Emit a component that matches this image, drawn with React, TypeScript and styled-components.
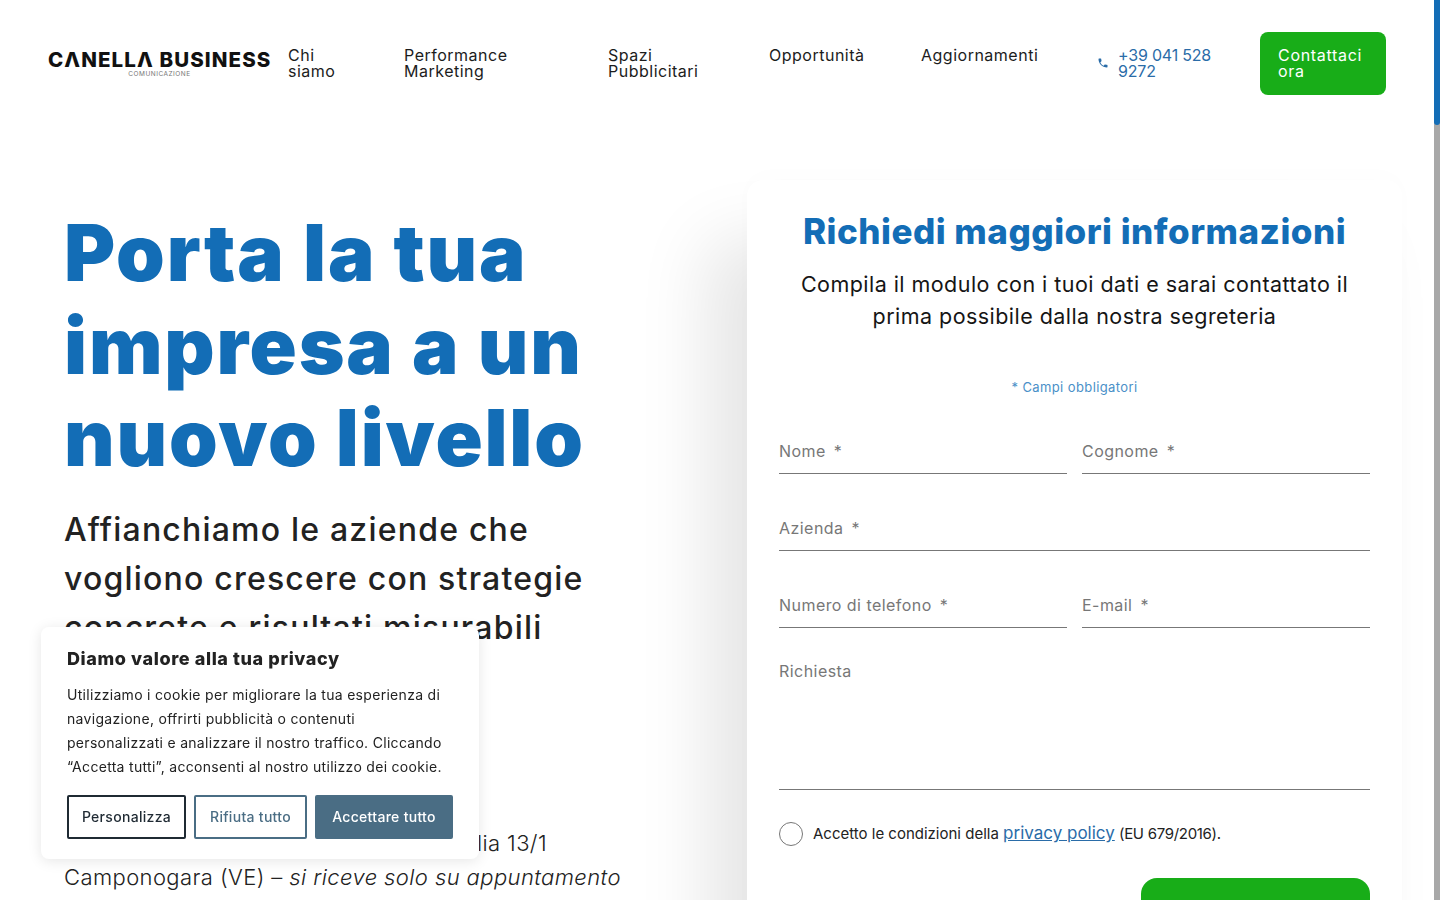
import React from "react";
import styled, { createGlobalStyle } from "styled-components";
import { MdPhone } from "react-icons/md";

const BLUE = "#136db6";
const GREEN = "#18ad18";
const SLATE = "#4a6d84";
const FONT = `Inter, "Open Sans", "Liberation Sans", sans-serif`;

const Global = createGlobalStyle`
  html, body { margin: 0; padding: 0; background: #fff; }
  body { font-family: ${FONT}; color: #222; overflow: hidden; }
  * { box-sizing: border-box; }
`;

const Page = styled.div`
  width: 1440px;
  height: 900px;
  overflow: hidden;
`;

const Header = styled.header`
  height: 127px;
  display: flex;
  align-items: flex-start;
  padding: 32px 54px 0 48px;
`;

const Logo = styled.div`
  width: 240px;
  padding-top: 17px;
  display: flex;
  flex-direction: column;
`;

const LogoName = styled.span`
  width: 223px;
  font-size: 20.5px;
  line-height: 22px;
  font-weight: 800;
  letter-spacing: 1.1px;
  color: #111;
  white-space: nowrap;
`;

const LogoSub = styled.span`
  width: 223px;
  text-align: center;
  font-size: 6.5px;
  line-height: 6px;
  letter-spacing: 0.5px;
  color: #777;
`;

const Nav = styled.nav`
  display: flex;
  align-items: flex-start;
  padding-top: 15px;
`;

const NavLink = styled.a<{ $w: number }>`
  width: ${({ $w }) => $w}px;
  padding-right: 30px;
  font-size: 16px;
  line-height: 16px;
  letter-spacing: 0.5px;
  color: #1c1c1c;
`;

const Phone = styled.a`
  width: 163px;
  display: flex;
  align-items: center;
  gap: 9px;
  padding-right: 30px;
  font-size: 16px;
  line-height: 16px;
  letter-spacing: -0.2px;
  color: #2a6ca8;
  svg { flex: none; }
`;

const CallButton = styled.a`
  width: 126px;
  height: 63px;
  padding: 15px 18px;
  border-radius: 8px;
  background: ${GREEN};
  color: #fff;
  font-size: 16px;
  line-height: 16px;
  letter-spacing: 0.7px;
`;

const Hero = styled.main`
  display: grid;
  grid-template-columns: 747px 655px;
  align-items: start;
`;

const Intro = styled.section`
  padding: 80px 0 0 64px;
`;

const Title = styled.h1`
  margin: 0 0 20px;
  font-size: 78px;
  line-height: 92.5px;
  font-weight: 900;
  letter-spacing: 1.8px;
  color: ${BLUE};
`;

const Lead = styled.p`
  margin: 0;
  height: 321px;
  width: 540px;
  font-size: 32px;
  line-height: 49px;
  font-weight: 500;
  letter-spacing: 1.2px;
  color: #222;
`;

const Address = styled.p`
  margin: 0;
  font-size: 22px;
  line-height: 34px;
  font-weight: 300;
  letter-spacing: 0.4px;
  color: #222;
  white-space: nowrap;
`;

const AddressTop = styled.span`
  display: block;
  width: 483px;
  text-align: right;
`;

const Card = styled.section`
  height: 900px;
  margin-top: 53px;
  padding: 28px 32px 0;
  border-radius: 16px;
  background: #fff;
  box-shadow: -40px 60px 70px rgba(0, 0, 0, 0.1), 0 -6px 24px rgba(0, 0, 0, 0.012);
`;

const CardTitle = styled.h2`
  margin: 0 0 14px;
  text-align: center;
  font-size: 35px;
  line-height: 46px;
  font-weight: 800;
  letter-spacing: 0.5px;
  color: ${BLUE};
`;

const CardLead = styled.p`
  margin: 0 0 47px;
  text-align: center;
  font-size: 21.5px;
  line-height: 32px;
  font-weight: 400;
  letter-spacing: 0.45px;
  color: #151515;
`;

const Required = styled.p`
  margin: 0 0 31px;
  text-align: center;
  font-size: 13px;
  line-height: 16px;
  letter-spacing: 0.4px;
  color: #4a90c8;
`;

const FormGrid = styled.div`
  display: grid;
  grid-template-columns: 288px 288px;
  justify-content: space-between;
  row-gap: 29px;
`;

const Field = styled.label<{ $wide?: boolean; $tall?: boolean }>`
  grid-column: ${({ $wide }) => ($wide ? "1 / -1" : "auto")};
  height: ${({ $tall }) => ($tall ? "133px" : "48px")};
  display: block;
  padding-top: ${({ $tall }) => ($tall ? "2px" : "13px")};
  border-bottom: 1px solid #777;
  font-size: 16px;
  line-height: 24px;
  letter-spacing: 0.45px;
  color: #777;
`;

const Star = styled.span`
  margin-left: 8px;
`;

const Consent = styled.div`
  display: flex;
  align-items: center;
  gap: 10px;
  margin-top: 31px;
  font-size: 15px;
  line-height: 24px;
  color: #222;
`;

const Radio = styled.span`
  width: 24px;
  height: 24px;
  border: 1px solid #777;
  border-radius: 50%;
`;

const Policy = styled.a`
  font-size: 17px;
  color: #2a6ca8;
  text-decoration: underline;
`;

const Regulation = styled.span`
  letter-spacing: -0.3px;
`;

const Submit = styled.button`
  display: block;
  width: 229px;
  height: 80px;
  margin: 32px 0 0 auto;
  border: 0;
  border-radius: 16px;
  background: ${GREEN};
`;

const Cookie = styled.aside`
  position: fixed;
  left: 41px;
  bottom: 41px;
  width: 438px;
  height: 232px;
  padding: 20px 26px;
  border-radius: 8px;
  background: #fff;
  box-shadow: 0 2px 14px rgba(0, 0, 0, 0.1);
`;

const CookieTitle = styled.h3`
  margin: 0 0 12px;
  font-size: 18px;
  line-height: 24px;
  font-weight: 800;
  letter-spacing: 0.6px;
  color: #222;
`;

const CookieText = styled.p`
  margin: 0 0 16px;
  font-size: 14px;
  line-height: 24px;
  letter-spacing: 0.3px;
  color: #222;
  white-space: nowrap;
`;

const CookieActions = styled.div`
  display: flex;
  gap: 8px;
`;

const CookieButton = styled.button<{ $kind: "dark" | "outline" | "solid"; $w: number }>`
  width: ${({ $w }) => $w}px;
  height: 44px;
  padding: 0 0 2px;
  border-radius: 2px;
  border: 2px solid ${({ $kind }) => ($kind === "dark" ? "#1f2a33" : SLATE)};
  background: ${({ $kind }) => ($kind === "solid" ? SLATE : "#fff")};
  color: ${({ $kind }) => ($kind === "dark" ? "#1f2a33" : $kind === "solid" ? "#fff" : SLATE)};
  font-family: ${FONT};
  font-size: 14px;
  font-weight: 500;
  letter-spacing: 0.3px;
`;

const Scrollbar = styled.div`
  position: fixed;
  top: 0;
  right: 0;
  width: 6px;
  height: 900px;
  background: #a8a8a8;
`;

const ScrollThumb = styled.div`
  height: 125px;
  border-radius: 0 0 3px 3px;
  background: ${BLUE};
`;

export default function App() {
  return (
    <Page>
      <Global />
      <Header>
        <Logo>
          <LogoName>CΛNELLΛ BUSINESS</LogoName>
          <LogoSub>COMUNICAZIONE</LogoSub>
        </Logo>
        <Nav>
          <NavLink $w={116}>
            Chi
            <br />
            siamo
          </NavLink>
          <NavLink $w={204}>
            Performance
            <br />
            Marketing
          </NavLink>
          <NavLink $w={161}>
            Spazi
            <br />
            Pubblicitari
          </NavLink>
          <NavLink $w={152}>Opportunità</NavLink>
          <NavLink $w={176}>Aggiornamenti</NavLink>
          <Phone>
            <MdPhone size={12} />
            <span>+39 041 528 9272</span>
          </Phone>
        </Nav>
        <CallButton>Contattaci ora</CallButton>
      </Header>
      <Hero>
        <Intro>
          <Title>
            Porta la tua
            <br />
            impresa a un
            <br />
            nuovo livello
          </Title>
          <Lead>Affianchiamo le aziende che vogliono crescere con strategie concrete e risultati misurabili</Lead>
          <Address>
            <AddressTop>Via Italia 13/1</AddressTop>
            Camponogara (VE) – <em>si riceve solo su appuntamento</em>
          </Address>
        </Intro>
        <Card>
          <CardTitle>Richiedi maggiori informazioni</CardTitle>
          <CardLead>
            Compila il modulo con i tuoi dati e sarai contattato il prima possibile dalla nostra segreteria
          </CardLead>
          <Required>* Campi obbligatori</Required>
          <FormGrid>
            <Field>
              Nome<Star>*</Star>
            </Field>
            <Field>
              Cognome<Star>*</Star>
            </Field>
            <Field $wide>
              Azienda<Star>*</Star>
            </Field>
            <Field>
              Numero di telefono<Star>*</Star>
            </Field>
            <Field>
              E-mail<Star>*</Star>
            </Field>
            <Field $wide $tall>
              Richiesta
            </Field>
          </FormGrid>
          <Consent>
            <Radio />
            <span>
              Accetto le condizioni della <Policy>privacy policy</Policy> <Regulation>(EU 679/2016).</Regulation>
            </span>
          </Consent>
          <Submit aria-label="Invia" />
        </Card>
      </Hero>
      <Cookie>
        <CookieTitle>Diamo valore alla tua privacy</CookieTitle>
        <CookieText>
          Utilizziamo i cookie per migliorare la tua esperienza di
          <br />
          navigazione, offrirti pubblicità o contenuti
          <br />
          personalizzati e analizzare il nostro traffico. Cliccando
          <br />
          “Accetta tutti”, acconsenti al nostro utilizzo dei cookie.
        </CookieText>
        <CookieActions>
          <CookieButton $kind="dark" $w={119}>Personalizza</CookieButton>
          <CookieButton $kind="outline" $w={113}>Rifiuta tutto</CookieButton>
          <CookieButton $kind="solid" $w={138}>Accettare tutto</CookieButton>
        </CookieActions>
      </Cookie>
      <Scrollbar>
        <ScrollThumb />
      </Scrollbar>
    </Page>
  );
}
